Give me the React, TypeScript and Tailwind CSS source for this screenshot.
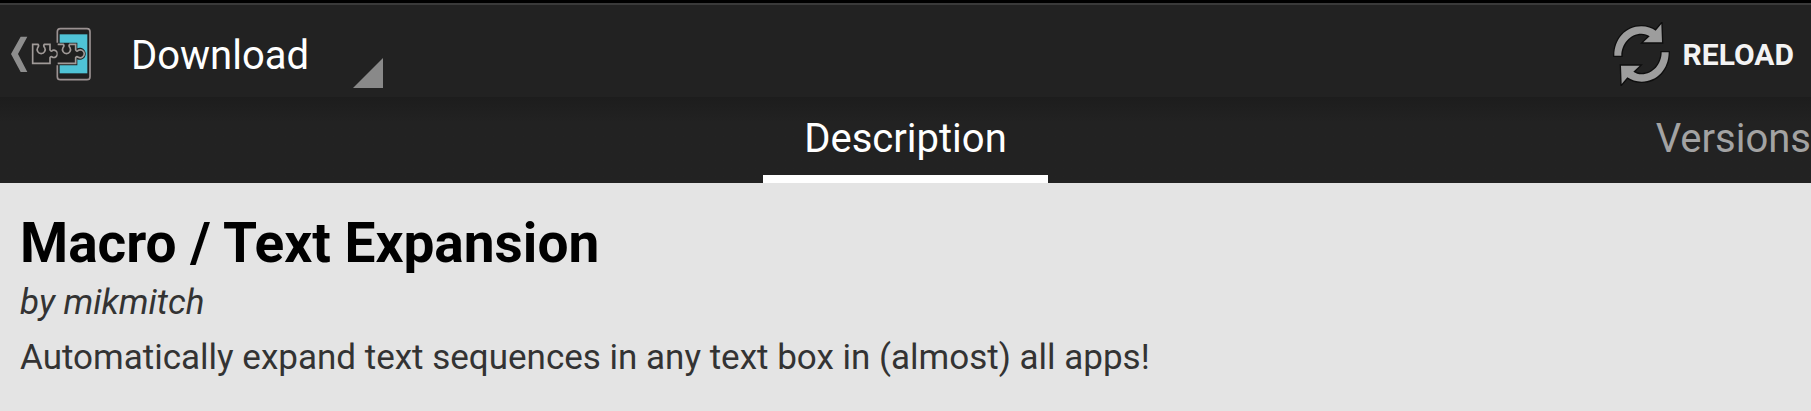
const arrowPath =
  "M46 165 C46 115 80 77 127 77 C144 77 158 82 170 90 L187 70 L189 125 L133 125 L152 107 C145 102 137 99 127 99 C93 99 67 130 67 165 Z";

const puzzlePath =
  "M98 130 H114 Q118 134 113 140 A12 12 0 1 0 134 140 Q129 134 133 130 H150 V147 Q153 153 158 148 A11 11 0 1 1 158 169 Q153 164 150 170 V187 H98 Z";

const screenPiecePath =
  "M173 130 H190 Q194 134 189 140 A12 12 0 1 0 210 140 Q205 134 209 130 H227 V147 Q230 153 235 148 A12 12 0 1 1 235 169 Q230 164 227 170 V187 H173";

function BackLogo() {
  return (
    <svg viewBox="30 75 246 168" className="h-[56px] w-[82px]" aria-hidden="true">
      <path d="M62 107 H82 L54 159 L82 213 H62 L33 159 Z" fill="#8e8e8e" />
      <rect x="172" y="83" width="98" height="153" rx="9" fill="#202020" stroke="#9b9292" strokeWidth="5" />
      <rect x="179" y="100" width="83" height="117" fill="#4fc3d6" />
      <path d="M166 125 H232 V142 A18 18 0 1 1 232 175 V193 H166 Z" fill="#202020" />
      <path d={puzzlePath} fill="#202020" stroke="#a09a98" strokeWidth="5" />
      <path d={screenPiecePath} fill="#202020" stroke="#a09a98" strokeWidth="5" />
    </svg>
  );
}

function ReloadIcon() {
  return (
    <svg viewBox="39 64 177 192" className="h-[64px] w-[59px]" aria-hidden="true">
      <g fill="#9d9d9d" stroke="#0e0e0e" strokeWidth="8" style={{ paintOrder: "stroke" }}>
        <path d={arrowPath} />
        <path d={arrowPath} transform="rotate(180 127.5 160)" />
      </g>
    </svg>
  );
}

export default function App() {
  return (
    <div className="flex min-h-screen flex-col overflow-hidden bg-[#e4e4e4] font-['Roboto',sans-serif]">
      <header className="flex h-[97px] items-center justify-between border-t-3 border-black bg-[#222222] pr-[17px] pl-[10px] pt-2 shadow-[inset_0_2px_0_#3a3a3a]">
        <div className="flex items-center gap-[39px]">
          <button type="button" aria-label="Back">
            <BackLogo />
          </button>
          <div className="relative">
            <select
              aria-label="Section"
              className="h-[68px] w-[252px] appearance-none bg-transparent pt-1 text-[40px] text-white outline-none"
            >
              <option>Download</option>
            </select>
            <svg viewBox="0 0 30 30" className="pointer-events-none absolute right-0 bottom-0 size-[30px]" aria-hidden="true">
              <path d="M30 0 V30 H0 Z" fill="#898989" />
            </svg>
          </div>
        </div>

        <button type="button" className="flex items-center gap-3 text-[30px] font-bold text-[#f3f3f3]">
          <ReloadIcon />
          RELOAD
        </button>
      </header>

      <nav className="grid h-[86px] grid-cols-[1fr_auto_1fr] bg-[#222222] bg-linear-to-b from-[#1d1d1d] to-[#222222] to-30% text-[40px] leading-[40px]">
        <a
          href="#description"
          aria-current="page"
          className="col-start-2 flex items-center border-b-8 border-white px-[41px] pt-1.5 text-white"
        >
          Description
        </a>
        <a href="#versions" className="flex items-center justify-end border-b-8 border-transparent pt-1.5 text-[#a3a3a3]">
          Versions
        </a>
      </nav>

      <main className="px-5 pt-7">
        <h1 className="text-[55px] leading-[64px] font-bold text-black">Macro / Text Expansion</h1>
        <p className="text-[35px] leading-[55px] text-[#333333] italic">by mikmitch</p>
        <p className="text-[35px] leading-[55px] text-[#333333]">
          Automatically expand text sequences in any text box in (almost) all apps!
        </p>
      </main>
    </div>
  );
}
